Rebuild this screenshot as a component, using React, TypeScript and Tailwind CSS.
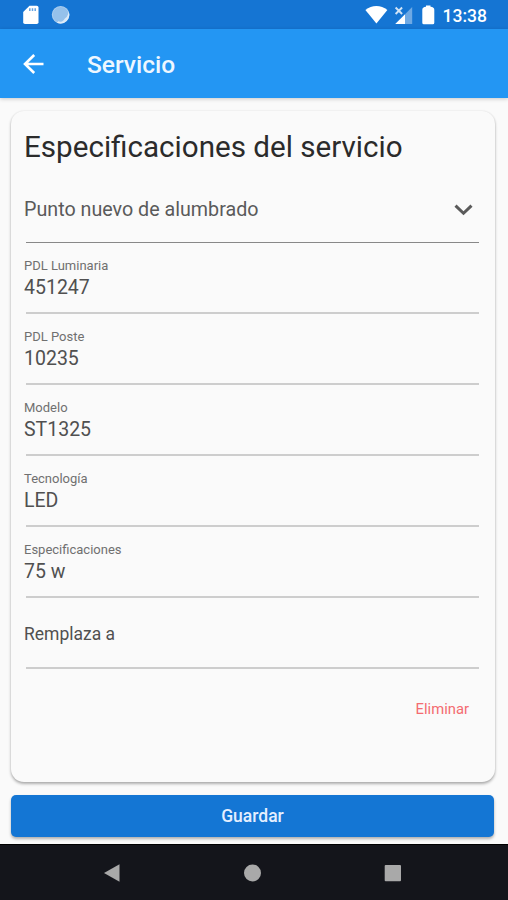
import React from "react";

function StatusBar() {
  return (
    <div className="flex h-[29px] shrink-0 items-center justify-between bg-[#1575d3] pl-[22px] pr-[21px] text-white">
      <svg width="50" height="22" viewBox="22 4 50 22" fill="currentColor">
        <path
          fillRule="evenodd"
          d="M29.5 5.7h7.2a1.8 1.8 0 0 1 1.8 1.8v14.7a1.8 1.8 0 0 1-1.800 1.800H25a1.800 1.800 0 0 1-1.800-1.800V12z"
        />
        <path d="M29.800 8.300v2.800M32.500 8.300v2.800M35.200 8.300v2.800" stroke="#1575d3" strokeWidth="1.500" opacity=".65" />
        <circle cx="60.6" cy="14.800" r="8.800" opacity=".55" />
        <path d="M68.600 11.300a8.800 8.800 0 0 1-11.600 11.500l1.200-1.500q3 1.300 5.400-1.100 1-2 3.100-3.200 2-2.200 1.900-5.700z" opacity=".65" />
        <circle cx="60.600" cy="14.800" r="8.300" fill="none" stroke="currentColor" opacity=".2" />
      </svg>
      <div className="flex items-center gap-[8px]">
        <svg width="71" height="22" viewBox="364 4 71 22" fill="currentColor">
          <path d="M365.400 10Q370.400 5.900 376.400 5.900T387.400 10L376.400 23.500z" />
          <path d="M405 14.200V24h-9.800z" />
          <path d="M405 14.200L412.200 7V24H405z" opacity=".38" />
          <path d="M395.600 7.500l6.500 6.500M402.100 7.500l-6.500 6.500" fill="none" stroke="currentColor" strokeWidth="1.900" opacity=".8" />
          <path d="M426 5.500h4.500v1.200q3.800 .3 3.800 3v13q0 1.500-1.500 1.500h-9q-1.500 0-1.500-1.500v-13q0-2.700 3.700-3z" />
        </svg>
        <span className="mt-[2px] text-[17.500px] font-medium leading-5">13:38</span>
      </div>
    </div>
  );
}

function AppBar() {
  return (
    <header className="relative z-10 flex h-[69px] shrink-0 items-center bg-[#2396f3] pl-[23px] text-white shadow-[0_1px_4px_rgba(0,0,0,0.2)]">
      <svg width="21" height="20" viewBox="0 0 21 20" fill="none" stroke="currentColor" strokeWidth="2.600">
        <path d="M20.500 10H2M11.200 1L2 10l9.200 9" />
      </svg>
      <h1 className="ml-[43px] mt-[3px] text-[24.500px] font-medium leading-8 text-[#eef7ff]">Servicio</h1>
    </header>
  );
}

function Field({ label, value }: { label: string; value?: string }) {
  return (
    <div className="flex h-[71px] flex-col border-b-2 border-[#cdcdcd] text-[#505050]">
      {value ? (
        <>
          <span className="-ml-[2px] mt-[14px] text-[13px] leading-[18px] text-[#707070]">{label}</span>
          <span className="-ml-[2px] mt-px text-[19.500px] leading-6">{value}</span>
        </>
      ) : (
        <span className="-ml-[2px] mt-6 text-[17.500px] leading-6">{label}</span>
      )}
    </div>
  );
}

const fields = [
  { label: "PDL Luminaria", value: "451247" },
  { label: "PDL Poste", value: "10235" },
  { label: "Modelo", value: "ST1325" },
  { label: "Tecnología", value: "LED" },
  { label: "Especificaciones", value: "75 w" },
  { label: "Remplaza a" },
];

export default function App() {
  return (
    <div className="flex h-[900px] w-[508px] flex-col overflow-hidden bg-[#fafafa] font-['Roboto',sans-serif]">
      <StatusBar />
      <AppBar />
      <main className="flex flex-1 flex-col px-[11px] pt-[13px]">
        <section className="flex h-[671px] w-[484px] flex-col rounded-[13px] bg-[#fafafa] pl-[15px] pr-4 shadow-[0_2px_3px_rgba(0,0,0,0.3),0_0_2px_rgba(0,0,0,0.1)]">
          <h2 className="-ml-[2px] mt-4 whitespace-nowrap text-[29.600px] leading-10 text-[#2b2b2b]">
            Especificaciones del servicio
          </h2>
          <div className="mt-[4px] flex h-[72px] items-center justify-between border-b border-[#888] pr-[6px] text-[#5a5a5a]">
            <span className="-ml-[2px] mt-[7px] text-[19.700px] leading-6">Punto nuevo de alumbrado</span>
            <svg className="mt-[6px]" width="19" height="12" viewBox="0 0 19 12" fill="none" stroke="currentColor" strokeWidth="3">
              <path d="M1.500 1.700l8 7.600 8-7.600" />
            </svg>
          </div>
          {fields.map((f) => (
            <Field key={f.label} {...f} />
          ))}
          <button className="mr-[10px] mt-[28px] self-end text-[14.800px] leading-6 text-[#f46b70]">Eliminar</button>
        </section>
        <button className="mt-[13px] h-[42px] w-[483px] rounded-[5px] bg-[#1476d4] text-[17.500px] font-medium text-[#e4efff] shadow-[0_2px_3px_rgba(0,0,0,0.3)]">
          Guardar
        </button>
      </main>
      <nav className="flex h-14 shrink-0 items-center border-t border-black bg-[#14151b] pl-[104px] text-[#a9a9a9]">
        <svg width="298" height="20" viewBox="0 0 298 20" fill="currentColor">
          <path d="M0 10L15.500 1.200v17.600z" />
          <circle cx="148.500" cy="10" r="8.500" />
          <rect x="280.700" y="2" width="16.300" height="16.300" rx="1" />
        </svg>
      </nav>
    </div>
  );
}
